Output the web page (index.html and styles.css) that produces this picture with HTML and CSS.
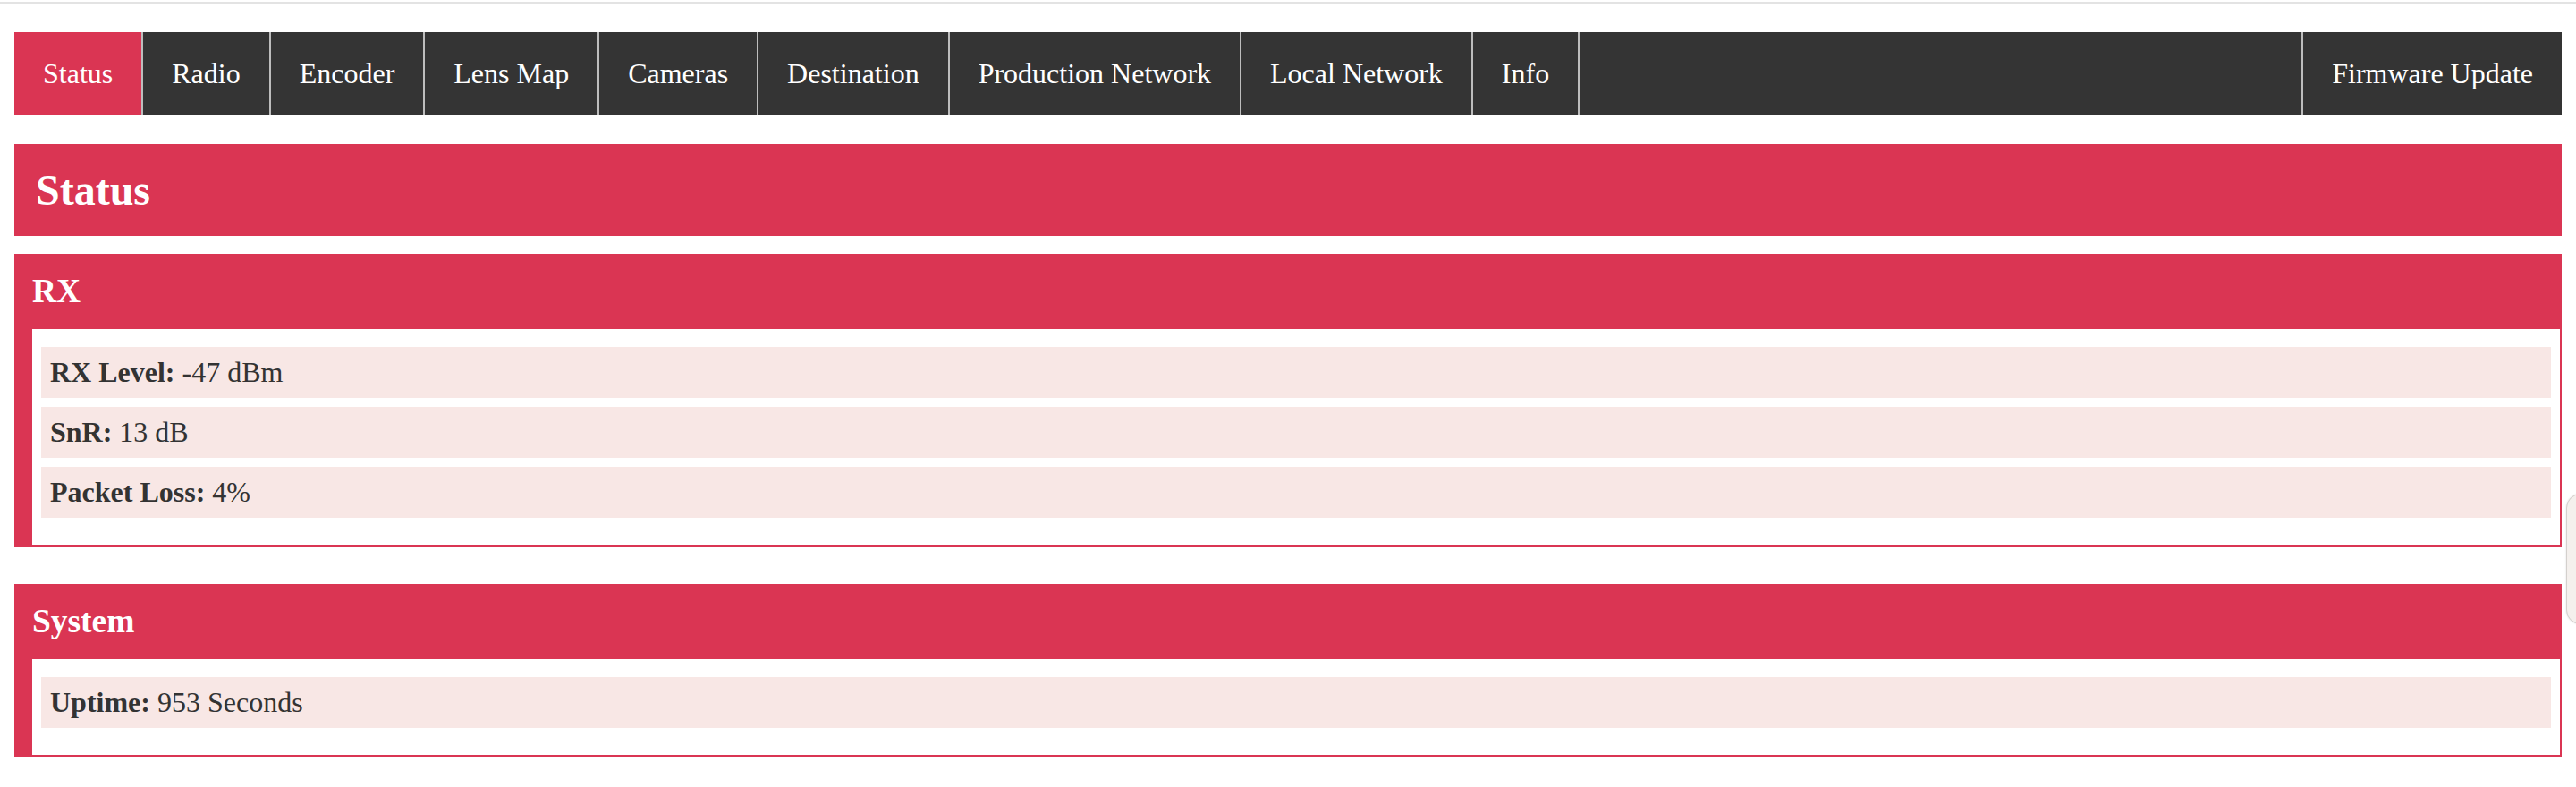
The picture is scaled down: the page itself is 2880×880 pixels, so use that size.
FILE: index.html
```html
<!DOCTYPE html>
<html lang="en">
<head>
<meta charset="utf-8">
<title>Status</title>
<link rel="stylesheet" href="styles.css">
</head>
<body>
<div class="topline"></div>
<div class="page">
  <nav class="nav">
    <a class="tab active">Status</a>
    <a class="tab">Radio</a>
    <a class="tab">Encoder</a>
    <a class="tab">Lens Map</a>
    <a class="tab">Cameras</a>
    <a class="tab">Destination</a>
    <a class="tab">Production Network</a>
    <a class="tab">Local Network</a>
    <a class="tab">Info</a>
    <div class="spacer"></div>
    <a class="tab tab-right">Firmware Update</a>
  </nav>

  <h2 class="page-title">Status</h2>

  <section class="card">
    <h3 class="card-title">RX</h3>
    <div class="card-body">
      <div class="row"><b>RX Level:</b>&nbsp;-47 dBm</div>
      <div class="row"><b>SnR:</b>&nbsp;13 dB</div>
      <div class="row"><b>Packet Loss:</b>&nbsp;4%</div>
    </div>
  </section>

  <section class="card card-system">
    <h3 class="card-title">System</h3>
    <div class="card-body">
      <div class="row"><b>Uptime:</b>&nbsp;953 Seconds</div>
    </div>
  </section>
</div>
<div class="side-handle"></div>
</body>
</html>
```

FILE: styles.css
```css
html, body {
  margin: 0;
  padding: 0;
  background: #ffffff;
}

body {
  font-family: "Liberation Serif", "Times New Roman", serif;
  color: #333333;
  position: relative;
  min-height: 880px;
  overflow: hidden;
}

.topline {
  height: 2px;
  margin-top: 2px;
  background: #e3e3e3;
}

.page {
  padding: 0 16px;
}

.nav {
  margin-top: 32px;
  height: 93px;
  background: #343434;
  display: flex;
  align-items: stretch;
}

.tab {
  display: flex;
  align-items: center;
  padding: 0 32px;
  color: #ffffff;
  font-size: 32px;
  line-height: 1.15;
  border-right: 2px solid #bdbdbd;
  white-space: nowrap;
  text-decoration: none;
}

.tab.active {
  background: #da3553;
}

.spacer {
  flex: 1;
}

.tab.tab-right {
  border-right: none;
  border-left: 2px solid #bdbdbd;
}

.page-title {
  margin: 32px 0 0;
  height: 103px;
  padding-left: 24px;
  background: #da3553;
  color: #ffffff;
  font-size: 48px;
  font-weight: bold;
  line-height: 1.15;
  display: flex;
  align-items: center;
}

.card {
  margin-top: 20px;
  background: #da3553;
  padding: 0 2px 3px 20px;
}

.card-system {
  margin-top: 41px;
}

.card-title {
  margin: 0;
  height: 84px;
  display: flex;
  align-items: center;
  color: #ffffff;
  font-size: 37.44px;
  font-weight: bold;
  line-height: 1.15;
}

.card-body {
  background: #ffffff;
  padding: 20px 10px 30px;
  display: flex;
  flex-direction: column;
  gap: 10px;
}

.row {
  height: 57px;
  background: #f8e7e5;
  padding-left: 10px;
  display: flex;
  align-items: center;
  font-size: 32px;
  line-height: 1.15;
  color: #333333;
  white-space: pre;
}

.row b {
  font-weight: bold;
}

.side-handle {
  position: absolute;
  left: 2869px;
  top: 552px;
  width: 40px;
  height: 146px;
  box-sizing: border-box;
  background: #f4f0ed;
  border: 1px solid #d4d0cd;
  border-radius: 16px;
  box-shadow: 0 0 2px rgba(0, 0, 0, 0.15);
}
```
